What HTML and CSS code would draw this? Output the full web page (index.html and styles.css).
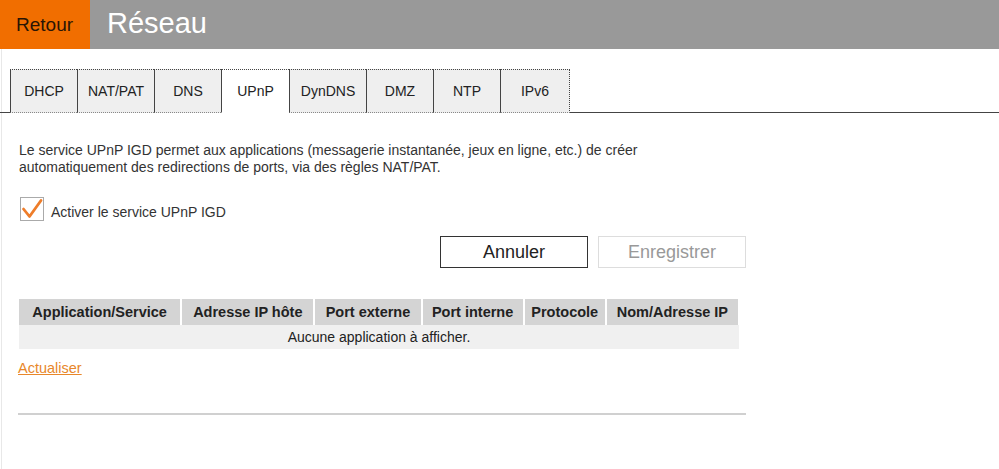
FILE: index.html
```html
<!DOCTYPE html>
<html>
    <head>
        <title>Réseau</title>
        <link rel="stylesheet" href="styles.css">
    </head>
    <body>
        <div class="header">
            <a class="back-button">Retour</a>
            <p class="title">Réseau</p>
        </div>

        <div class="content">
            <div class="tabs">
                <div class="tab">DHCP</div>
                <div class="tab tab-wide">NAT/PAT</div>
                <div class="tab">DNS</div>
                <div class="tab tab-active">UPnP</div>
                <div class="tab tab-wide">DynDNS</div>
                <div class="tab">DMZ</div>
                <div class="tab">NTP</div>
                <div class="tab tab-last">IPv6</div>
            </div>

            <div class="page">
                <p class="intro">Le service UPnP IGD permet aux applications (messagerie instantanée, jeux en ligne, etc.) de créer<br>automatiquement des redirections de ports, via des règles NAT/PAT.</p>

                <label class="check-row">
                    <span class="check-box">
                        <svg width="22" height="22" viewBox="0 0 22 22"><path d="M2.5 11 L8.5 18.5 L20 2.5" fill="none" stroke="#ee7d2a" stroke-width="2.8" stroke-linecap="round" stroke-linejoin="round"/></svg>
                    </span>
                    Activer le service UPnP IGD
                </label>

                <div class="buttons">
                    <button class="cancel-button">Annuler</button>
                    <button class="save-button">Enregistrer</button>
                </div>

                <table class="upnp-table">
                    <tr>
                        <th class="col-app">Application/Service</th>
                        <th class="col-ip">Adresse IP hôte</th>
                        <th class="col-ext">Port externe</th>
                        <th class="col-int">Port interne</th>
                        <th class="col-proto">Protocole</th>
                        <th class="col-name">Nom/Adresse IP</th>
                    </tr>
                    <tr>
                        <td colspan="6" class="empty">Aucune application à afficher.</td>
                    </tr>
                </table>

                <a class="refresh-link" href="#">Actualiser</a>

                <div class="separator"></div>
            </div>
        </div>
    </body>
</html>
```

FILE: styles.css
```css
body{
    margin:0;
    font-family:"Liberation Sans", Arial, sans-serif;
    color:#333;
    background-color:white;
}

.header{
    display:flex;
    height:49px;
    background-color:#999;
}

.back-button{
    display:flex;
    align-items:center;
    width:74px;
    padding-left:16px;
    background-color:#f16e00;
    color:#2a1505;
    font-size:19px;
}

.title{
    margin:0;
    padding-left:17px;
    line-height:46px;
    font-size:29px;
    color:white;
}

.content{
    margin-left:1px;
    border-left:1px solid #e8e8e8;
    height:420px;
}

.tabs{
    display:flex;
    padding-top:20px;
    padding-left:10px;
    border-bottom:1px solid #444;
    margin-left:-2px;
}

.tab{
    width:66px;
    height:42px;
    line-height:43px;
    text-align:center;
    font-size:14px;
    color:#222;
    background-color:#efefef;
    border-top:1px dotted #444;
    border-left:1px solid #444;
    border-bottom:1px dotted #888;
    margin-bottom:-1px;
}

.tab-wide{
    width:76px;
}

.tab-active{
    width:67px;
    background-color:white;
    border-bottom:1px solid white;
}

.tab-last{
    width:68px;
    border-right:1px dotted #444;
}

.intro{
    margin:29px 0 0 17px;
    font-size:14px;
    line-height:17px;
}

.check-row{
    display:flex;
    align-items:center;
    margin:26px 0 0 18px;
    font-size:14px;
}

.check-box{
    display:flex;
    align-items:center;
    justify-content:center;
    width:22px;
    height:22px;
    border:1px solid #aaa;
    margin-right:7px;
    margin-top:-5px;
}

.buttons{
    display:flex;
    gap:10px;
    margin:15px 0 0 438px;
}

.cancel-button, .save-button{
    width:148px;
    height:32px;
    font-family:"Liberation Sans", Arial, sans-serif;
    font-size:18px;
    background-color:white;
}

.cancel-button{
    border:1px solid #333;
    color:#222;
}

.save-button{
    border:1px solid #ddd;
    color:#999;
}

.upnp-table{
    margin:31px 0 0 17px;
    border-collapse:collapse;
    width:721px;
}

.upnp-table th{
    background-color:#d4d4d4;
    border-right:2px solid white;
    height:26px;
    padding:0;
    font-size:14.5px;
    color:#222;
}

.col-app{ width:161px; }
.col-ip{ width:131px; }
.col-ext{ width:105px; }
.col-int{ width:100px; }
.col-proto{ width:80px; }
.col-name{ width:131px; }

.empty{
    background-color:#f0f0f0;
    height:24px;
    padding:0;
    text-align:center;
    font-size:14px;
    color:#222;
}

.refresh-link{
    display:inline-block;
    margin:11px 0 0 16px;
    font-size:14.5px;
    color:#e8872a;
}

.separator{
    margin:36px 0 0 16px;
    width:728px;
    border-top:2px solid #d0d0d0;
}
```
